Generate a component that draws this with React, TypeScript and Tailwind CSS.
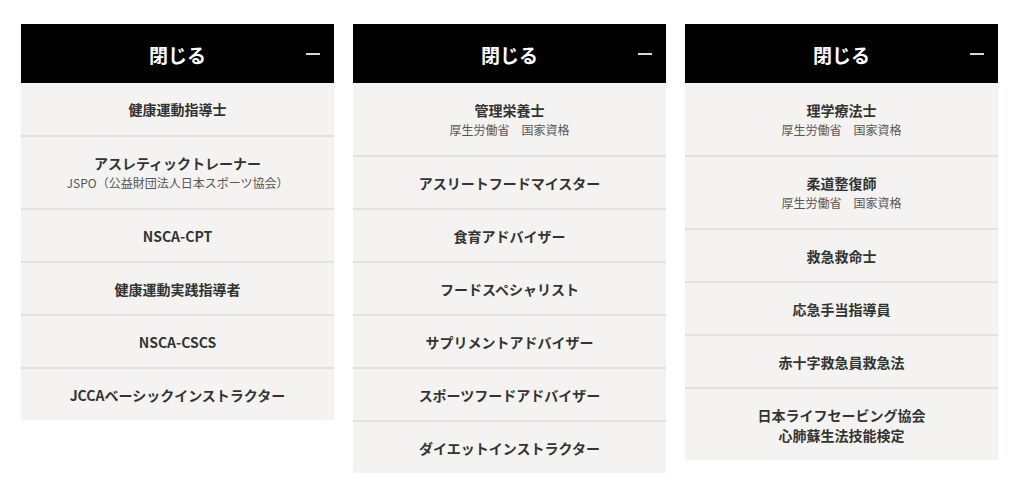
type Item = { title: string[]; sub?: string };

const columns: Item[][] = [
  [
    { title: ['健康運動指導士'] },
    { title: ['アスレティックトレーナー'], sub: 'JSPO（公益財団法人日本スポーツ協会）' },
    { title: ['NSCA-CPT'] },
    { title: ['健康運動実践指導者'] },
    { title: ['NSCA-CSCS'] },
    { title: ['JCCAベーシックインストラクター'] },
  ],
  [
    { title: ['管理栄養士'], sub: '厚生労働省　国家資格' },
    { title: ['アスリートフードマイスター'] },
    { title: ['食育アドバイザー'] },
    { title: ['フードスペシャリスト'] },
    { title: ['サプリメントアドバイザー'] },
    { title: ['スポーツフードアドバイザー'] },
    { title: ['ダイエットインストラクター'] },
  ],
  [
    { title: ['理学療法士'], sub: '厚生労働省　国家資格' },
    { title: ['柔道整復師'], sub: '厚生労働省　国家資格' },
    { title: ['救急救命士'] },
    { title: ['応急手当指導員'] },
    { title: ['赤十字救急員救急法'] },
    { title: ['日本ライフセービング協会', '心肺蘇生法技能検定'] },
  ],
]

const Panel = ({ items }: { items: Item[] }) => (
  <div className="w-[313px] self-start">
    <div className="relative flex h-[59px] items-center justify-center bg-black">
      <span className="pt-[3px] text-[19px] font-bold text-white">閉じる</span>
      <span className="absolute right-[14px] top-[29px] h-[2px] w-[14px] bg-[#d8d8d8]" />
    </div>
    <ul className="bg-[#f4f3f1]">
      {items.map((item, i) => {
        const tall = item.title.length > 1 || !!item.sub
        const h = i === 0 ? (tall ? 'h-[72px]' : 'h-[52px]') : tall ? 'h-[73px]' : 'h-[53px]'
        return (
          <li
            key={i}
            className={`flex flex-col items-center justify-center text-center ${h} ${
              i > 0 ? 'border-t-2 border-[#e3e2e0]' : ''
            }`}
          >
            {item.title.map((t, j) => (
              <span key={j} className="text-[14px] font-bold leading-[20px] text-[#333]">
                {t}
              </span>
            ))}
            {item.sub && (
              <span className="mt-[1px] text-[12px] leading-[18px] text-[#555]">{item.sub}</span>
            )}
          </li>
        )
      })}
    </ul>
  </div>
)

export default function App() {
  return (
    <div
      className="flex h-[504px] w-[1024px] items-start gap-[19px] bg-white pl-[21px] pt-[24px]"
      style={{ fontFamily: '"Noto Sans CJK JP", "Noto Sans", sans-serif' }}
    >
      {columns.map((items, i) => (
        <Panel key={i} items={items} />
      ))}
    </div>
  )
}
